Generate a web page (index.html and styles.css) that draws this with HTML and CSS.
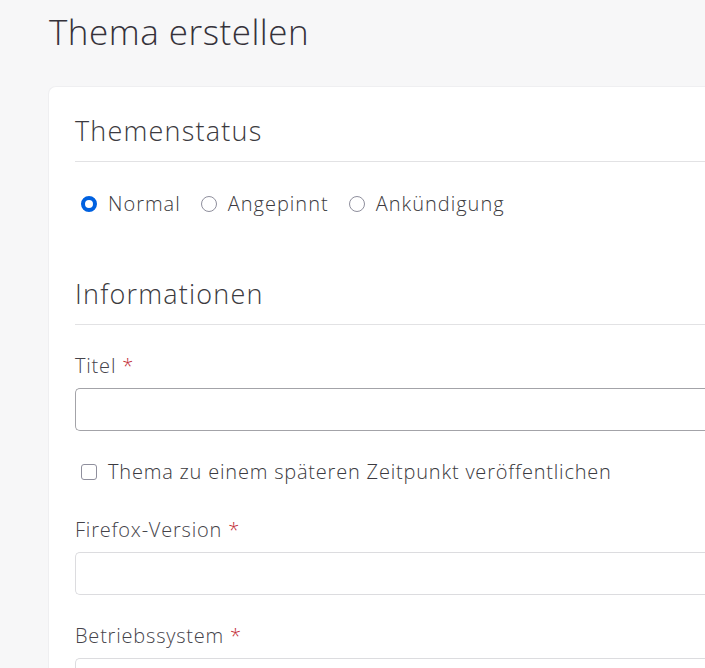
FILE: index.html
```html
<!DOCTYPE html>
<html lang="de">
<head>
    <meta charset="UTF-8">
    <meta name="viewport" content="width=device-width, initial-scale=1.0">
    <title>Thema erstellen</title>
    <link rel="stylesheet" href="styles.css">
</head>
<body>
    <div class="page">
        <h1 class="page-title">Thema erstellen</h1>

        <div class="card">
            <section class="section">
                <h2 class="section-title">Themenstatus</h2>
                <div class="radio-group">
                    <label class="radio">
                        <input type="radio" name="status" checked>
                        <span>Normal</span>
                    </label>
                    <label class="radio">
                        <input type="radio" name="status">
                        <span>Angepinnt</span>
                    </label>
                    <label class="radio">
                        <input type="radio" name="status">
                        <span>Ankündigung</span>
                    </label>
                </div>
            </section>

            <section class="section">
                <h2 class="section-title">Informationen</h2>

                <div class="field">
                    <label class="field-label">Titel <span class="required">*</span></label>
                    <input type="text" class="input input-active">
                </div>

                <label class="checkbox">
                    <input type="checkbox">
                    <span>Thema zu einem späteren Zeitpunkt veröffentlichen</span>
                </label>

                <div class="field">
                    <label class="field-label">Firefox-Version <span class="required">*</span></label>
                    <input type="text" class="input">
                </div>

                <div class="field">
                    <label class="field-label">Betriebssystem <span class="required">*</span></label>
                    <input type="text" class="input">
                </div>
            </section>
        </div>
    </div>
</body>
</html>
```

FILE: styles.css
```css
* {
    margin: 0;
    padding: 0;
    box-sizing: border-box;
}

html,
body {
    height: 100%;
    overflow: hidden;
}

body {
    font-family: 'Open Sans', 'Noto Sans', sans-serif;
    font-weight: 300;
    color: #3b3a40;
    background-color: #f7f7f8;
}

.page {
    padding: 10px 0 0 48px;
    height: 100%;
    display: flex;
    flex-direction: column;
}

.page-title {
    font-size: 35px;
    font-weight: 300;
    line-height: 44px;
    letter-spacing: 0.5px;
    padding-left: 1px;
    margin-bottom: 32px;
    color: #35323a;
}

.card {
    flex: 1;
    overflow: hidden;
    background: #fff;
    border-radius: 8px 0 0 0;
    border: 1px solid #efeff1;
    border-right: none;
    border-bottom: none;
    padding: 26px 0 0 26px;
}

.section-title {
    font-size: 27px;
    font-weight: 300;
    line-height: 36px;
    letter-spacing: 1.2px;
    padding-bottom: 12px;
    border-bottom: 1px solid #e2e2e4;
    color: #3b3a40;
}

.section + .section {
    margin-top: 59px;
}

.radio-group {
    display: flex;
    gap: 20px;
    padding: 29px 0 0 6px;
}

.radio,
.checkbox {
    display: flex;
    align-items: center;
    gap: 11px;
    font-size: 20px;
    line-height: 26px;
    letter-spacing: 0.8px;
    color: #3b3a40;
}

.radio {
    letter-spacing: 1px;
}

.radio input {
    appearance: none;
    width: 16px;
    height: 16px;
    border: 1px solid #8f8f9d;
    border-radius: 50%;
    margin: 0;
}

.radio input:checked {
    border: 4px solid #0061e0;
}

.checkbox {
    padding: 28px 0 0 6px;
}

.checkbox input {
    appearance: none;
    width: 16px;
    height: 16px;
    border: 1px solid #8f8f9d;
    border-radius: 3px;
    margin: 0;
}

.field {
    margin-top: 28px;
}

.checkbox + .field {
    margin-top: 32px;
}

.field-label {
    display: block;
    font-size: 20px;
    line-height: 26px;
    letter-spacing: 0.8px;
    margin-bottom: 9px;
    color: #45434a;
}

.required {
    color: #c4303a;
}

.input {
    display: block;
    width: 100%;
    height: 43px;
    border: 1px solid #dcdcdf;
    border-right: none;
    border-radius: 5px 0 0 5px;
    background: #fff;
}

.input-active {
    border-color: #a3a3a8;
}
```
